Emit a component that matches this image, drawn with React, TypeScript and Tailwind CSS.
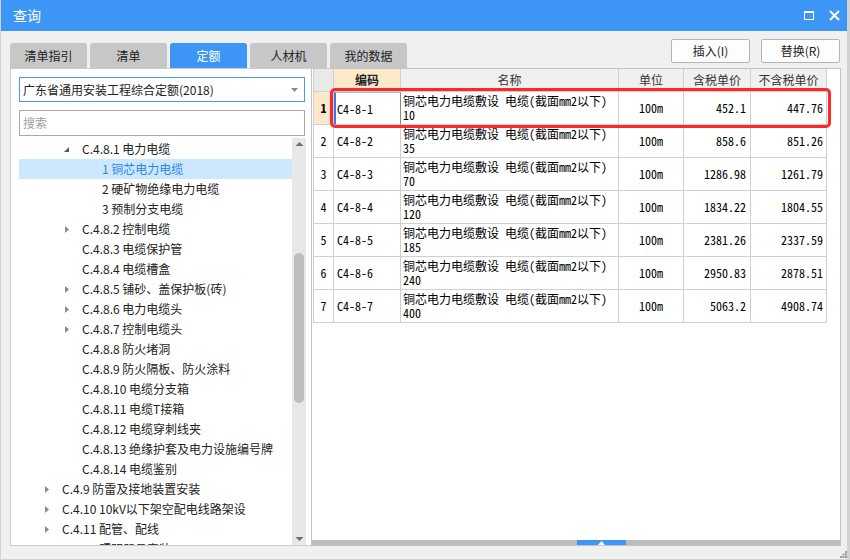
import React from "react";

type Node = {
  level: number;
  state?: "open" | "closed";
  text: string;
  selected?: boolean;
};

const TREE: Node[] = [
  { level: 2, state: "open", text: "C.4.8.1 电力电缆" },
  { level: 3, text: "1 铜芯电力电缆", selected: true },
  { level: 3, text: "2 硬矿物绝缘电力电缆" },
  { level: 3, text: "3 预制分支电缆" },
  { level: 2, state: "closed", text: "C.4.8.2 控制电缆" },
  { level: 2, text: "C.4.8.3 电缆保护管" },
  { level: 2, text: "C.4.8.4 电缆槽盒" },
  { level: 2, state: "closed", text: "C.4.8.5 铺砂、盖保护板(砖)" },
  { level: 2, state: "closed", text: "C.4.8.6 电力电缆头" },
  { level: 2, state: "closed", text: "C.4.8.7 控制电缆头" },
  { level: 2, text: "C.4.8.8 防火堵洞" },
  { level: 2, text: "C.4.8.9 防火隔板、防火涂料" },
  { level: 2, text: "C.4.8.10 电缆分支箱" },
  { level: 2, text: "C.4.8.11 电缆T接箱" },
  { level: 2, text: "C.4.8.12 电缆穿刺线夹" },
  { level: 2, text: "C.4.8.13 绝缘护套及电力设施编号牌" },
  { level: 2, text: "C.4.8.14 电缆鉴别" },
  { level: 1, state: "closed", text: "C.4.9 防雷及接地装置安装" },
  { level: 1, state: "closed", text: "C.4.10 10kV以下架空配电线路架设" },
  { level: 1, state: "closed", text: "C.4.11 配管、配线" },
  { level: 1, state: "closed", text: "C.4.12 照明器具安装" },
];

const ROWS = [
  ["C4-8-1", "10", "452.1", "447.76"],
  ["C4-8-2", "35", "858.6", "851.26"],
  ["C4-8-3", "70", "1286.98", "1261.79"],
  ["C4-8-4", "120", "1834.22", "1804.55"],
  ["C4-8-5", "185", "2381.26", "2337.59"],
  ["C4-8-6", "240", "2950.83", "2878.51"],
  ["C4-8-7", "400", "5063.2", "4908.74"],
];

const TABS = ["清单指引", "清单", "定额", "人材机", "我的数据"];

const ui = "font-['Noto_Sans_CJK_SC','Noto_Sans',sans-serif]";
const mono =
  "font-['Noto_Sans_Mono_CJK_SC','Liberation_Mono','Noto_Sans_CJK_SC',monospace]";

function Arrow({ state }: { state?: "open" | "closed" }) {
  if (state === "open")
    return (
      <svg width="7" height="7" viewBox="0 0 7 7">
        <path d="M6 1 L6 6 L1 6 Z" fill="#5a5a5a" />
      </svg>
    );
  if (state === "closed")
    return (
      <svg width="6" height="9" viewBox="0 0 6 9">
        <path d="M1 1 L5 4.5 L1 8 Z" fill="#8a8a8a" />
      </svg>
    );
  return null;
}

function TreeRow({ node }: { node: Node }) {
  // text starts 43px in for level 1, 20px more per level
  const pad = 43 + (node.level - 1) * 20;
  return (
    <div
      className={`h-[20px] flex items-center shrink-0 whitespace-nowrap ${
        node.selected ? "bg-[#cce8ff] text-[#2f86e6]" : "text-[#222]"
      }`}
    >
      <div style={{ width: pad }} className="shrink-0 flex justify-end pr-[12px]">
        <Arrow state={node.state} />
      </div>
      <span className="text-[12px]">{node.text}</span>
    </div>
  );
}

export default function App() {
  return (
    <div
      className={`w-[850px] h-[560px] bg-[#f0f0f0] flex flex-col border-l border-r-[3px] border-b border-[#d2d2d2] ${ui} overflow-hidden`}
    >
      {/* title bar */}
      <div className="h-[31px] shrink-0 bg-[#3d96f5] flex items-center justify-between pl-[12px] pr-[7px] text-white">
        <span className="text-[14px]">查询</span>
        <div className="flex items-center gap-[15px]">
          <div className="w-[10px] h-[9px] border border-white border-t-[2px]" />
          <svg width="11" height="11" viewBox="0 0 11 11">
            <path d="M1 1 L10 10 M10 1 L1 10" stroke="#fff" strokeWidth="2" />
          </svg>
        </div>
      </div>

      {/* tabs + buttons */}
      <div className="h-[37px] shrink-0 flex justify-between pl-[9px] pr-[7px]">
        <div className="flex items-end gap-[3px]">
          {TABS.map((t) => (
            <div
              key={t}
              className={`w-[77px] h-[25px] rounded-t-[3px] flex items-center justify-center text-[12px] ${
                t === "定额" ? "bg-[#3d96f5] text-white" : "bg-[#c7c7c7] text-[#222]"
              }`}
            >
              {t}
            </div>
          ))}
        </div>
        <div className="flex gap-[11px] mt-[8px]">
          {["插入(I)", "替换(R)"].map((b) => (
            <div
              key={b}
              className="w-[79px] h-[24px] bg-[#fdfdfd] border border-[#b4b4b4] rounded-[2px] flex items-center justify-center text-[12px] text-[#222]"
            >
              {b}
            </div>
          ))}
        </div>
      </div>

      {/* body */}
      <div className="h-[478px] shrink-0 flex pl-[9px]">
        {/* left panel */}
        <div className="w-[301px] h-full bg-white border border-[#cdcdcd] border-r-0 flex flex-col">
          <div className="pl-[8px] pr-[6px] pt-[8px] flex flex-col gap-[8px] shrink-0">
            <div className="h-[25px] border border-[#4a9bf5] flex items-center justify-between pl-[3px] pr-[6px]">
              <span className="text-[12px] text-[#222]">广东省通用安装工程综合定额(2018)</span>
              <svg width="7" height="4" viewBox="0 0 7 4">
                <path d="M0 0 L7 0 L3.5 4 Z" fill="#8a8a8a" />
              </svg>
            </div>
            <div className="h-[26px] border border-[#a9a9a9] flex items-center pl-[3px]">
              <span className="text-[12px] text-[#a0a0a0]">搜索</span>
            </div>
          </div>
          <div className="flex-1 flex min-h-0 mt-[2px] pl-[8px] pr-[5px]">
            <div className="flex-1 flex flex-col overflow-hidden pt-[1px]">
              {TREE.map((n) => (
                <TreeRow key={n.text} node={n} />
              ))}
            </div>
            <div className="w-[14px] bg-[#e8e8e8] flex flex-col items-center justify-between">
              <svg width="9" height="10" viewBox="0 0 9 10" className="mt-[1px]">
                <path d="M0.5 7 L8.5 7 L4.5 3 Z" fill="#707070" />
              </svg>
              <div className="w-[10px] h-[150px] rounded-full bg-[#bdbdbd] mt-[104px]" />
              <div className="flex-1" />
              <svg width="9" height="10" viewBox="0 0 9 10" className="mb-[1px]">
                <path d="M0.5 3 L8.5 3 L4.5 7 Z" fill="#707070" />
              </svg>
            </div>
          </div>
        </div>

        {/* right panel */}
        <div className="w-[530px] h-full bg-white border border-[#c3c3c3] flex flex-col">
          <div className="relative flex-1 pl-[1px]">
            <div className="grid grid-cols-[20px_67px_218px_65px_67px_76px] w-[513px] border-l border-[#d0d0d0] text-[12px] text-black">
              <div className="h-[23px] bg-[#e9e9e9] border-r border-b border-[#d0d0d0]" />
              <div className="h-[23px] bg-[#fde8cc] border-r border-b border-[#d0d0d0] flex items-center justify-center font-bold text-[#222]">
                编码
              </div>
              {["名称", "单位", "含税单价", "不含税单价"].map((h) => (
                <div
                  key={h}
                  className="h-[23px] bg-[#f0f0f0] border-r border-b border-[#d0d0d0] flex items-center justify-center text-[#333]"
                >
                  {h}
                </div>
              ))}
              {ROWS.map((r, i) => {
                const first = i === 0;
                return (
                  <React.Fragment key={r[0]}>
                    <div
                      className={`h-[33px] border-r border-b border-[#d0d0d0] flex items-center justify-center ${mono} ${
                        first ? "bg-[#fde8cc] font-bold" : ""
                      }`}
                    >
                      {i + 1}
                    </div>
                    <div
                      className={`h-[33px] border-b flex items-center ${mono} ${
                        first
                          ? "border-l-2 border-l-[#2a7cf0] border-t border-t-[#9cc3f4] border-r border-r-[#8a8a8a] border-b-[#d0d0d0] pl-[1px]"
                          : "border-r border-[#d0d0d0] pl-[3px]"
                      }`}
                    >
                      {r[0]}
                    </div>
                    <div
                      className={`h-[33px] border-r border-b border-[#d0d0d0] flex flex-col justify-center pl-[2px] leading-[14px] ${mono}`}
                    >
                      <span className="whitespace-nowrap">铜芯电力电缆敷设 电缆(截面mm2以下)</span>
                      <span>{r[1]}</span>
                    </div>
                    <div
                      className={`h-[33px] border-r border-b border-[#d0d0d0] flex items-center justify-center ${mono}`}
                    >
                      100m
                    </div>
                    <div
                      className={`h-[33px] border-r border-b border-[#d0d0d0] flex items-center justify-end pr-[4px] ${mono}`}
                    >
                      {r[2]}
                    </div>
                    <div
                      className={`h-[33px] border-r border-b border-[#d0d0d0] flex items-center justify-end pr-[3px] ${mono}`}
                    >
                      {r[3]}
                    </div>
                  </React.Fragment>
                );
              })}
            </div>
            {/* annotation */}
            <div className="absolute left-[18px] top-[19px] w-[501px] h-[40px] border-[3px] border-[#ff2828] rounded-[5px]" />
          </div>
          <div className="h-[5px] shrink-0 bg-[#bcbcbc] flex justify-center pl-[50px]">
            <div className="w-[49px] h-[5px] bg-[#3d96f5] flex items-end justify-center">
              <svg width="7" height="4" viewBox="0 0 7 4">
                <path d="M0 4 L7 4 L3.5 0 Z" fill="#fff" />
              </svg>
            </div>
          </div>
        </div>
      </div>

      {/* bottom strip with grip */}
      <div className="flex-1 flex justify-end items-end pb-[1px]">
        <svg width="7" height="7" viewBox="0 0 7 7">
          <rect x="5" y="0" width="2" height="2" fill="#9a9a9a" />
          <rect x="2.5" y="2.5" width="2" height="2" fill="#9a9a9a" />
          <rect x="5" y="2.5" width="2" height="2" fill="#9a9a9a" />
          <rect x="0" y="5" width="2" height="2" fill="#9a9a9a" />
          <rect x="2.5" y="5" width="2" height="2" fill="#9a9a9a" />
          <rect x="5" y="5" width="2" height="2" fill="#9a9a9a" />
        </svg>
      </div>
    </div>
  );
}
